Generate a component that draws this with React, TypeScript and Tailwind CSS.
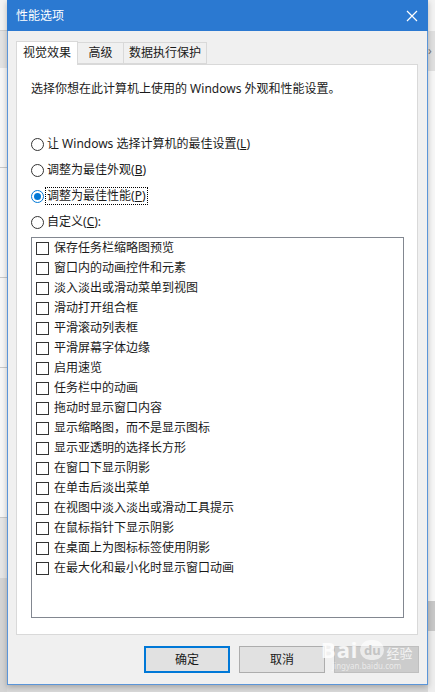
const items = [
  "保存任务栏缩略图预览",
  "窗口内的动画控件和元素",
  "淡入淡出或滑动菜单到视图",
  "滑动打开组合框",
  "平滑滚动列表框",
  "平滑屏幕字体边缘",
  "启用速览",
  "任务栏中的动画",
  "拖动时显示窗口内容",
  "显示缩略图，而不是显示图标",
  "显示亚透明的选择长方形",
  "在窗口下显示阴影",
  "在单击后淡出菜单",
  "在视图中淡入淡出或滑动工具提示",
  "在鼠标指针下显示阴影",
  "在桌面上为图标标签使用阴影",
  "在最大化和最小化时显示窗口动画",
];

function Radio({ checked, label, keyChar, focus }: { checked?: boolean; label: string; keyChar: string; focus?: boolean }) {
  return (
    <div className="flex items-center h-[20px]">
      <span
        className={
          "w-[13px] h-[13px] rounded-full border flex items-center justify-center bg-white " +
          (checked ? "border-[#0078d7]" : "border-[#333333]")
        }
      >
        {checked && <span className="w-[7px] h-[7px] rounded-full bg-[#0078d7]" />}
      </span>
      <span className={"ml-[2px] px-[1px] leading-[16px] " + (focus ? "outline outline-1 outline-dotted outline-[#000]" : "")}>
        {label}(<span className="underline">{keyChar}</span>){keyChar === "C" ? ":" : ""}
      </span>
    </div>
  );
}

export default function App() {
  return (
    <div
      className="w-[435px] h-[692px] flex bg-[#d9d9d9] text-[12px] text-[#1a1a1a] overflow-hidden"
      style={{ fontFamily: '"Noto Sans", "Noto Sans CJK SC", sans-serif' }}
    >
      {/* left of dialog: window behind */}
      <div className="w-[7px] flex flex-col">
        <div className="h-[31px] bg-[#f3f3f3] border-b border-[#d0d0d0]" />
        <div className="h-[37px] bg-[#e3e3e3]" />
        <div className="h-[100px] bg-[#f7f7f7] border-b border-[#c8c8c8]" />
        <div className="h-[110px] bg-[#f7f7f7] border-b border-[#c8c8c8]" />
        <div className="h-[90px] bg-[#f7f7f7] border-b border-[#c8c8c8]" />
        <div className="h-[150px] bg-[#f7f7f7] border-b border-[#c8c8c8]" />
        <div className="h-[60px] bg-[#e6e6e6]" />
        <div className="flex-1 bg-[#d4d4d4]" />
      </div>

      {/* dialog */}
      <div className="relative w-[421px] h-[685px] flex flex-col bg-[#f0f0f0] border-x border-b border-[#5b95d8] shadow-[0_2px_6px_rgba(0,0,0,0.25)]">
        <div className="h-[31px] bg-[#2b79d1] flex items-center justify-between pl-[9px] pr-[9px] text-white -mx-[1px]">
          <span className="text-[12px]">性能选项</span>
          <svg width="12" height="12" viewBox="0 0 12 12" className="mr-[1px]">
            <path d="M1 1L11 11M11 1L1 11" stroke="white" strokeWidth="1.2" />
          </svg>
        </div>

        <div className="pl-[8px] pr-[9px] pt-[9px]">
          {/* tabs */}
          <div className="flex items-end h-[24px]">
            <div className="h-[24px] w-[62px] bg-white border border-b-0 border-[#d9d9d9] flex items-center justify-center relative z-10 -mb-[1px] pb-[1px]">
              视觉效果
            </div>
            <div className="h-[22px] w-[46px] border border-l-0 border-[#d9d9d9] flex items-center justify-center">
              高级
            </div>
            <div className="h-[22px] w-[83px] border border-l-0 border-[#d9d9d9] flex items-center justify-center">
              数据执行保护
            </div>
          </div>

          {/* panel */}
          <div className="h-[571px] bg-white border border-[#d9d9d9] pl-[14px] pt-[16px]">
            <p className="leading-[16px]">选择你想在此计算机上使用的 Windows 外观和性能设置。</p>

            <div className="mt-[37px] flex flex-col gap-[6px]">
              <Radio label="让 Windows 选择计算机的最佳设置" keyChar="L" />
              <Radio label="调整为最佳外观" keyChar="B" />
              <Radio checked focus label="调整为最佳性能" keyChar="P" />
              <Radio label="自定义" keyChar="C" />
            </div>

            <div className="mt-[5px] w-[373px] h-[381px] border border-[#828790] pl-[4px]">
              {items.map((t) => (
                <div key={t} className="flex items-center h-[20px]">
                  <span className="w-[13px] h-[13px] border border-[#333333] bg-white" />
                  <span className="ml-[5px] leading-[16px]">{t}</span>
                </div>
              ))}
            </div>
          </div>
        </div>

        {/* buttons */}
        <div className="mt-[11px] pr-[8px] flex justify-end gap-[9px]">
          <button className="w-[86px] h-[27px] bg-[#e1e1e1] border-2 border-[#0078d7]">确定</button>
          <button className="w-[86px] h-[27px] bg-[#e1e1e1] border border-[#adadad]">取消</button>
          <button aria-label="应用" disabled className="w-[85px] h-[27px] bg-[#cccccc] border border-[#bfbfbf]" />
        </div>

        {/* watermark */}
        <div className="absolute left-[313px] top-[638px] flex flex-col items-center text-white/80 pointer-events-none">
          <div className="flex items-end gap-[2px] leading-none">
            <span className="text-[22px] font-bold tracking-[1px]">Bai</span>
            <span className="w-[24px] h-[20px] rounded-full bg-white/60 text-[#c4c4c4] text-[13px] font-bold flex items-center justify-center">du</span>
            <span className="text-[13px] text-[#f3f3f3]">经验</span>
          </div>
          <span className="text-[8px] text-white/60 leading-[12px]">jingyan.baidu.com</span>
        </div>
      </div>

      {/* right of dialog */}
      <div className="flex-1 flex flex-col">
        <div className="h-[31px] bg-[#f3f3f3]" />
        <div className="h-[40px] bg-[#e0e0e0] flex items-center text-[#777] text-[12px]">›</div>
        <div className="h-[530px] bg-[#f7f7f7]" />
        <div className="h-[30px] bg-[#c8c8c8]" />
        <div className="flex-1 bg-[#eeeeee]" />
      </div>
    </div>
  );
}
